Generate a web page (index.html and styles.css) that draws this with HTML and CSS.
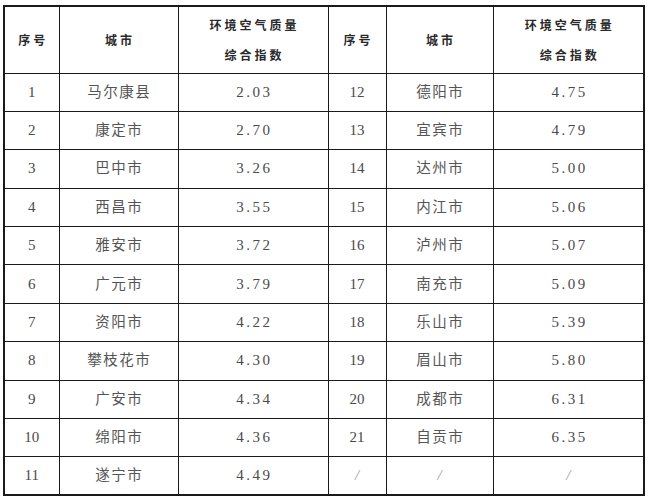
FILE: index.html
```html
<!DOCTYPE html>
<html lang="zh">
<head>
<meta charset="utf-8">
<link rel="stylesheet" href="styles.css">
</head>
<body>
<table class="aq">
  <colgroup>
    <col class="c1"><col class="c2"><col class="c3"><col class="c4"><col class="c5"><col class="c6">
  </colgroup>
  <thead>
    <tr class="head">
      <th>序号</th><th>城市</th><th>环境空气质量<br>综合指数</th>
      <th>序号</th><th>城市</th><th>环境空气质量<br>综合指数</th>
    </tr>
  </thead>
  <tbody>
    <tr><td class="n">1</td><td class="city">马尔康县</td><td class="v">2.03</td><td class="n">12</td><td class="city">德阳市</td><td class="v">4.75</td></tr>
    <tr><td class="n">2</td><td class="city">康定市</td><td class="v">2.70</td><td class="n">13</td><td class="city">宜宾市</td><td class="v">4.79</td></tr>
    <tr><td class="n">3</td><td class="city">巴中市</td><td class="v">3.26</td><td class="n">14</td><td class="city">达州市</td><td class="v">5.00</td></tr>
    <tr><td class="n">4</td><td class="city">西昌市</td><td class="v">3.55</td><td class="n">15</td><td class="city">内江市</td><td class="v">5.06</td></tr>
    <tr><td class="n">5</td><td class="city">雅安市</td><td class="v">3.72</td><td class="n">16</td><td class="city">泸州市</td><td class="v">5.07</td></tr>
    <tr><td class="n">6</td><td class="city">广元市</td><td class="v">3.79</td><td class="n">17</td><td class="city">南充市</td><td class="v">5.09</td></tr>
    <tr><td class="n">7</td><td class="city">资阳市</td><td class="v">4.22</td><td class="n">18</td><td class="city">乐山市</td><td class="v">5.39</td></tr>
    <tr><td class="n">8</td><td class="city">攀枝花市</td><td class="v">4.30</td><td class="n">19</td><td class="city">眉山市</td><td class="v">5.80</td></tr>
    <tr><td class="n">9</td><td class="city">广安市</td><td class="v">4.34</td><td class="n">20</td><td class="city">成都市</td><td class="v">6.31</td></tr>
    <tr><td class="n">10</td><td class="city">绵阳市</td><td class="v">4.36</td><td class="n">21</td><td class="city">自贡市</td><td class="v">6.35</td></tr>
    <tr><td class="n">11</td><td class="city">遂宁市</td><td class="v">4.49</td><td class="sl">/</td><td class="sl">/</td><td class="sl">/</td></tr>
  </tbody>
</table>
</body>
</html>
```
FILE: styles.css
```css
html, body {
  margin: 0;
  padding: 0;
  background: #fff;
}
body {
  padding: 5px 0 0 3px;
}
.aq {
  border-collapse: collapse;
  table-layout: fixed;
  width: 641px;
  border: 2px solid #1a1a1a;
  font-family: "Liberation Serif", "Noto Sans CJK SC", serif;
  color: #4a4a4a;
}
.c1 { width: 55px; }
.c2 { width: 119px; }
.c3 { width: 150px; }
.c4 { width: 58px; }
.c5 { width: 107px; }
.c6 { width: 151px; }
.aq th, .aq td {
  border: 1px solid #1a1a1a;
  padding: 0;
  text-align: center;
  vertical-align: middle;
}
.head {
  height: 67px;
}
.aq th {
  font-family: "Noto Sans CJK SC", sans-serif;
  font-weight: bold;
  font-size: 12px;
  line-height: 30px;
  letter-spacing: 3px;
  padding-left: 3px;
  color: #2a2a2a;
}
.aq tbody tr {
  height: 38.4px;
}
.n {
  font-size: 15px;
}
.aq td.city {
  font-family: "Noto Sans CJK SC", sans-serif;
  font-size: 14.5px;
  line-height: 18px;
  letter-spacing: 1.5px;
  padding: 0 0 3px 1.5px;
  color: #555;
}
.aq td.v {
  font-size: 15px;
  letter-spacing: 2.5px;
  padding-left: 2.5px;
}
.sl {
  color: #9a9a9a;
  font-size: 15px;
  font-style: italic;
}
```
